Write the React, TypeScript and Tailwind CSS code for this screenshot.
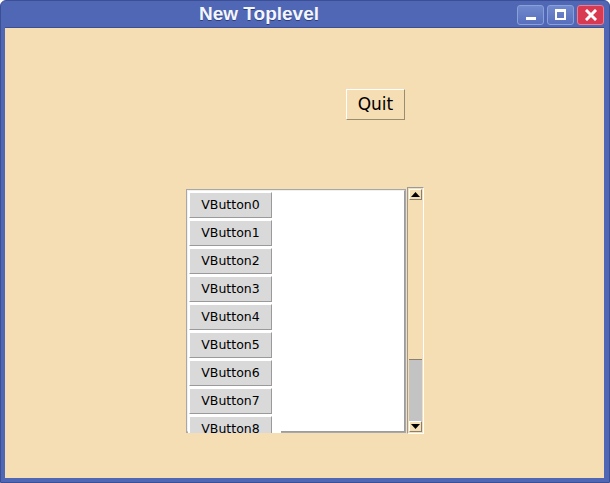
const font = { fontFamily: '"DejaVu Sans", "Liberation Sans", sans-serif' };

function TitleButton({ kind }: { kind: "min" | "max" | "close" }) {
  const red = kind === "close";
  return (
    <div
      className={
        "w-[27px] h-[20px] rounded-[3px] border flex items-center justify-center " +
        (red
          ? "bg-[#d83a52] border-[#f07c8c]"
          : "bg-gradient-to-b from-[#7088cc] to-[#5870bc] border-[#8aa0d8]")
      }
    >
      {kind === "min" && <div className="w-[10px] h-[3px] bg-white mt-[8px]" />}
      {kind === "max" && <div className="w-[11px] h-[11px] border-2 border-white border-t-[3px]" />}
      {kind === "close" && (
        <svg width="12" height="12" viewBox="0 0 12 12">
          <path d="M2 2 L10 10 M10 2 L2 10" stroke="white" strokeWidth="3" strokeLinecap="square" />
        </svg>
      )}
    </div>
  );
}

function VButton({ label }: { label: string }) {
  return (
    <div className="w-[83px] h-[26px] shrink-0 bg-[#d9d9d9] border border-t-white border-l-white border-b-[#9a9a9a] border-r-[#9a9a9a] flex items-center justify-center text-[12.5px] text-black">
      {label}
    </div>
  );
}

function Arrow({ up }: { up: boolean }) {
  return (
    <div className="h-[11px] shrink-0 bg-[#f5deb3] border border-t-white border-l-white border-b-[#8a8070] border-r-[#8a8070] flex items-center justify-center">
      <svg width="9" height="5" viewBox="0 0 9 5">
        <path d={up ? "M0 5 L4.5 0 L9 5 Z" : "M0 0 L4.5 5 L9 0 Z"} fill="black" />
      </svg>
    </div>
  );
}

export default function App() {
  const buttons = Array.from({ length: 9 }, (_, i) => `VButton${i}`);
  return (
    <div className="w-[610px] h-[483px] bg-[#4f67b5] rounded-t-[6px] border border-[#3c4f94] flex flex-col" style={font}>
      <div className="h-[26px] shrink-0 flex items-center">
        <div className="flex-1 flex items-center justify-center">
          <span
            className="text-[#f4f6ff] font-bold text-[19px] [text-shadow:0_1px_0_#2c3c78]"
            style={{ fontFamily: '"Liberation Sans", Arial, sans-serif' }}
          >
            New Toplevel
          </span>
        </div>
        <div className="mr-[5px] mt-[1px] flex gap-[3px]">
          <TitleButton kind="min" />
          <TitleButton kind="max" />
          <TitleButton kind="close" />
        </div>
      </div>
      <div className="flex-1 ml-[4px] mr-[5px] mb-[4px] bg-[#f5deb3] flex flex-col border-t border-[#3c4f94]">
        <div className="ml-[341px] mt-[61px] w-[59px] h-[31px] border border-t-white border-l-white border-b-[#9a8c70] border-r-[#9a8c70] flex items-center justify-center text-[17px] text-black">
          Quit
        </div>
        <div className="ml-[181px] mt-[69px] flex items-start">
          <div className="w-[220px] h-[244px] border border-[#a8a8a8] bg-white flex flex-col">
            <div className="h-[242px] border border-t-[#f0f0f0] border-l-[#f0f0f0] border-b-[#9c9c9c] border-r-[#9c9c9c]">
              <div className="w-[93px] h-[242px] bg-white overflow-hidden pl-[1px] pt-[1px] flex flex-col gap-[2px]">
                {buttons.map((b) => (
                  <VButton key={b} label={b} />
                ))}
              </div>
            </div>
          </div>
          <div className="ml-[1px] -mt-[2px] w-[17px] h-[247px] border border-t-[#9a9a9a] border-l-[#9a9a9a] border-b-white border-r-white bg-[#f5deb3] flex flex-col p-[1px]">
            <Arrow up />
            <div className="flex-1 flex flex-col justify-end">
              <div className="h-[62px] bg-[#c3c3c3] border-t border-[#8a8070]" />
            </div>
            <Arrow up={false} />
          </div>
        </div>
      </div>
    </div>
  );
}
